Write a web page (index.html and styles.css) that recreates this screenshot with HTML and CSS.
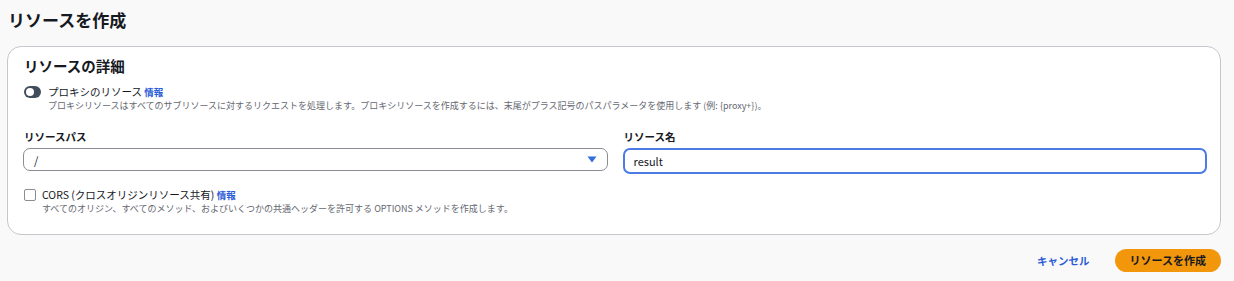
FILE: index.html
```html
<!DOCTYPE html>
<html lang="ja">
<head>
    <meta charset="UTF-8">
    <link rel="stylesheet" href="styles.css">
</head>
<body>
    <h1 class="title">リソースを作成</h1>
    <div class="card">
        <h2 class="card-title">リソースの詳細</h2>
        <div class="opt">
            <span class="toggle"><span class="knob"></span></span>
            <div>
                <div class="opt-label">プロキシのリソース <a class="info">情報</a></div>
                <div class="desc">プロキシリソースはすべてのサブリソースに対するリクエストを処理します。プロキシリソースを作成するには、末尾がプラス記号のパスパラメータを使用します (例: {proxy+})。</div>
            </div>
        </div>
        <div class="fields">
            <div class="field">
                <div class="label">リソースパス</div>
                <div class="select">
                    <span>/</span>
                    <svg width="10" height="7" viewBox="0 0 10 7"><path d="M0.5 0.5 H9.5 L5 6.5 Z" fill="#2f6fe4"/></svg>
                </div>
            </div>
            <div class="field">
                <div class="label">リソース名</div>
                <div class="input">result</div>
            </div>
        </div>
        <div class="opt cors">
            <span class="check"></span>
            <div>
                <div class="opt-label">CORS (クロスオリジンリソース共有) <a class="info">情報</a></div>
                <div class="desc">すべてのオリジン、すべてのメソッド、およびいくつかの共通ヘッダーを許可する OPTIONS メソッドを作成します。</div>
            </div>
        </div>
    </div>
    <div class="actions">
        <a class="cancel">キャンセル</a>
        <a class="primary">リソースを作成</a>
    </div>
</body>
</html>
```

FILE: styles.css
```css
body{
    margin: 0;
    background: #f9f9f9;
    font-family: "Noto Sans CJK JP", "Noto Sans", sans-serif;
    color: #16191f;
}
.title{
    margin: 0;
    padding: 8px 0 0 8px;
    font-size: 17px;
    line-height: 24px;
    font-weight: 700;
}
.card{
    margin: 14px 13px 0 7px;
    height: 187px;
    background: #fff;
    border: 1px solid #c6c6cd;
    border-radius: 14px;
    padding: 0 13px 0 15px;
}
.card-title{
    margin: 9px 0 0 1px;
    font-size: 14.5px;
    line-height: 20px;
    font-weight: 700;
}
.opt{
    display: flex;
    align-items: flex-start;
    margin-top: 9px;
    padding-left: 1px;
}
.toggle{
    width: 17px;
    height: 12px;
    border-radius: 6px;
    background: #414d5c;
    margin-top: 1px;
    margin-right: 7px;
    position: relative;
    flex-shrink: 0;
}
.knob{
    position: absolute;
    left: 2px;
    top: 2px;
    width: 8px;
    height: 8px;
    border-radius: 50%;
    background: #fff;
}
.opt-label{
    font-size: 10.5px;
    line-height: 14px;
}
.info{
    color: #2a5bd7;
    font-weight: 700;
    font-size: 9.5px;
}
.desc{
    font-size: 9px;
    line-height: 13px;
    color: #656871;
}
.fields{
    display: grid;
    grid-template-columns: 1fr 1fr;
    gap: 15px;
    margin-top: 18px;
}
.label{
    font-size: 10.5px;
    line-height: 14px;
    font-weight: 700;
    padding-left: 1px;
    margin-bottom: 4px;
}
.select{
    height: 21px;
    border: 1px solid #8c8c94;
    border-radius: 7px;
    display: flex;
    align-items: center;
    justify-content: space-between;
    padding: 0 10px 0 10px;
    font-size: 11px;
    margin-top: 2px;
}
.input{
    height: 22px;
    border: 2px solid #4b7be5;
    border-radius: 7px;
    display: flex;
    align-items: center;
    padding: 0 9px;
    font-size: 11px;
}
.cors{
    margin-top: 14px;
}
.check{
    width: 10px;
    height: 10px;
    border: 1px solid #8c8c94;
    border-radius: 2px;
    margin-top: 1px;
    margin-right: 6px;
    flex-shrink: 0;
}
.actions{
    display: flex;
    justify-content: flex-end;
    align-items: center;
    gap: 25px;
    margin: 14px 13px 0 0;
}
.cancel{
    color: #2a5bd7;
    font-weight: 700;
    font-size: 10.5px;
}
.primary{
    background: #f2960c;
    color: #16191f;
    font-weight: 700;
    font-size: 11px;
    line-height: 23px;
    padding: 0 15px;
    border-radius: 12px;
}
```
